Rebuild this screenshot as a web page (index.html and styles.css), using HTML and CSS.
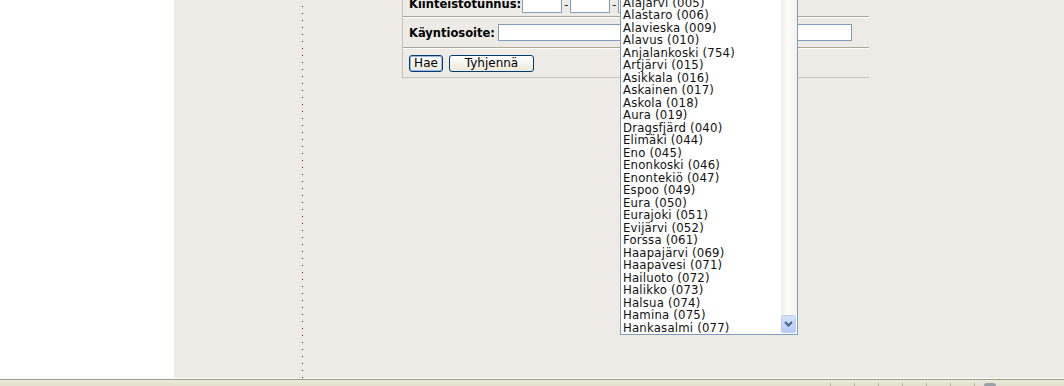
FILE: index.html
```html
<!DOCTYPE html>
<html lang="fi">
<head>
    <meta charset="UTF-8">
    <title>Kiinteistöhaku</title>
    <link rel="stylesheet" href="styles.css">
</head>
<body>
    <div class="window">
        <div class="sidebar"></div>

        <div class="main">
            <div class="rule"></div>

            <div class="search-form">
                <div class="form-row row-id">
                    <span class="label">Kiinteistötunnus:</span>
                    <span class="id-fields">
                        <input type="text" class="id-input">
                        <span class="dash">-</span>
                        <input type="text" class="id-input">
                        <span class="dash">-</span>
                        <input type="text" class="id-input">
                    </span>
                </div>
                <div class="form-row row-address">
                    <span class="label">Käyntiosoite:</span>
                    <input type="text" class="address-input">
                </div>
                <div class="form-row row-buttons">
                    <button class="btn btn-default">Hae</button>
                    <button class="btn btn-clear">Tyhjennä</button>
                </div>
            </div>

            <!-- open dropdown of the municipality select -->
            <div class="dropdown">
                <ul class="dropdown-list">
                    <li>Alahärmä (004)</li>
                    <li>Alajärvi (005)</li>
                    <li>Alastaro (006)</li>
                    <li>Alavieska (009)</li>
                    <li>Alavus (010)</li>
                    <li>Anjalankoski (754)</li>
                    <li>Artjärvi (015)</li>
                    <li>Asikkala (016)</li>
                    <li>Askainen (017)</li>
                    <li>Askola (018)</li>
                    <li>Aura (019)</li>
                    <li>Dragsfjärd (040)</li>
                    <li>Elimäki (044)</li>
                    <li>Eno (045)</li>
                    <li>Enonkoski (046)</li>
                    <li>Enontekiö (047)</li>
                    <li>Espoo (049)</li>
                    <li>Eura (050)</li>
                    <li>Eurajoki (051)</li>
                    <li>Evijärvi (052)</li>
                    <li>Forssa (061)</li>
                    <li>Haapajärvi (069)</li>
                    <li>Haapavesi (071)</li>
                    <li>Hailuoto (072)</li>
                    <li>Halikko (073)</li>
                    <li>Halsua (074)</li>
                    <li>Hamina (075)</li>
                    <li>Hankasalmi (077)</li>
                </ul>
                <div class="scrollbar">
                    <div class="scroll-track"></div>
                    <div class="scroll-down">
                        <svg width="9" height="6" viewBox="0 0 9 6">
                            <path d="M1 1 L4.5 4.5 L8 1" fill="none" stroke="#4d6185" stroke-width="2"/>
                        </svg>
                    </div>
                </div>
            </div>
        </div>
    </div>

    <div class="statusbar">
        <span class="status-cell"></span>
        <span class="status-cell"></span>
        <span class="status-cell"></span>
        <span class="status-cell"></span>
        <span class="status-cell"></span>
        <span class="status-cell"></span>
        <span class="status-cell status-cell-last"></span>
        <span class="status-icon"></span>
    </div>
</body>
</html>
```

FILE: styles.css
```css
body {
    margin: 0;
    padding: 0;
    width: 1064px;
    height: 386px;
    overflow: hidden;
    font-family: 'DejaVu Sans', sans-serif;
    background-color: #ffffff;
}

.window {
    display: flex;
    height: 379px;
}

.sidebar {
    width: 174px;
    background-color: #ffffff;
}

.main {
    flex: 1;
    display: flex;
    position: relative;
    background-color: #eeebe6;
    height: 378px;
    border-bottom: 1px solid #ffffff;
}

.rule {
    width: 1px;
    margin-left: 128px;
    background: repeating-linear-gradient(to bottom, transparent 0 6px, #7a1010 6px 7px);
}

.search-form {
    margin-left: 99px;
    margin-top: -8px;
    width: 466px;
    align-self: flex-start;
    border-left: 1px solid #c6c2b8;
    border-bottom: 1px solid #c6c2b8;
}

.form-row {
    display: flex;
    align-items: center;
    padding-left: 6px;
    border-bottom: 1px solid #aca899;
    box-shadow: 0 1px 0 #ffffff;
    margin-bottom: 1px;
}

.form-row:last-child {
    border-bottom: none;
    box-shadow: none;
    margin-bottom: 0;
}

.label {
    font-size: 11.5px;
    font-weight: bold;
    color: #000000;
}

.row-id {
    height: 24px;
}

.id-fields {
    display: flex;
    align-items: center;
    margin-left: 1px;
}

.id-input {
    width: 38px;
    height: 15px;
    padding: 0;
    border: 1px solid #7f9db9;
    background: #ffffff;
}

.dash {
    font-size: 11px;
    width: 8px;
    text-align: center;
}

.row-address {
    height: 29px;
}

.address-input {
    margin-left: 3px;
    width: 352px;
    height: 15px;
    padding: 0;
    border: 1px solid #7f9db9;
    background: #ffffff;
}

.row-buttons {
    height: 28px;
    gap: 6px;
    padding-left: 6px;
}

.btn {
    height: 17px;
    padding: 0 4px;
    font-family: 'DejaVu Sans', sans-serif;
    font-size: 12px;
    line-height: 13px;
    color: #000000;
    background: linear-gradient(#ffffff, #ece9d8);
    border: 1px solid #003c74;
    border-radius: 3px;
}

.btn-clear {
    width: 85px;
}

.btn-default {
    width: 34px;
    box-shadow: inset 0 0 0 1px #98b8ea;
}

.dropdown {
    position: absolute;
    left: 446px;
    top: -17px;
    width: 176px;
    height: 350px;
    display: flex;
    background-color: #ffffff;
    border: 1px solid #7f9db9;
    overflow: hidden;
}

.dropdown-list {
    flex: 1;
    margin: 0;
    padding: 0 0 0 2px;
    list-style: none;
    font-family: 'DejaVu Sans Condensed', 'DejaVu Sans', sans-serif;
    font-size: 13px;
    line-height: 12.5px;
    letter-spacing: 0.2px;
    color: #111111;
}

.dropdown-list li {
    height: 12.5px;
    white-space: nowrap;
}

.scrollbar {
    width: 16px;
    display: flex;
    flex-direction: column;
}

.scroll-track {
    flex: 1;
    background: linear-gradient(to right, #eeede5, #fdfdfa 40%, #f3f1ea);
}

.scroll-down {
    height: 16px;
    margin: 0 1px 1px 0;
    display: flex;
    align-items: center;
    justify-content: center;
    background: linear-gradient(#d6e2fc, #b5c9f7);
    border: 1px solid #b8cdf7;
    border-radius: 2px;
}

.statusbar {
    display: flex;
    align-items: flex-end;
    height: 6px;
    padding-left: 830px;
    background: linear-gradient(#ecead9, #e2dfcf);
    border-top: 1px solid #9c9b8e;
}

.status-cell {
    width: 23px;
    height: 3px;
    border-left: 1px solid #b7b4a6;
}

.status-cell-last {
    width: 9px;
}

.status-icon {
    width: 12px;
    height: 3px;
    border-radius: 6px 6px 0 0;
    background: #9aa0a8;
}
```
